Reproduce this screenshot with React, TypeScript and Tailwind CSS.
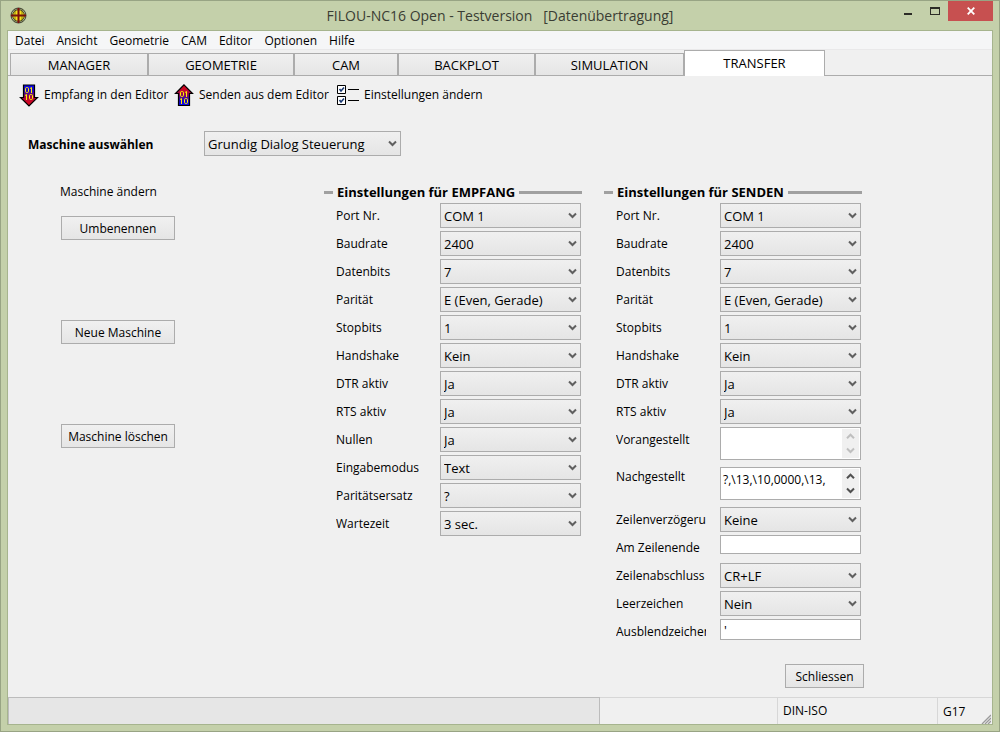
import { useState, type ReactNode } from "react";

const menuItems = ["Datei", "Ansicht", "Geometrie", "CAM", "Editor", "Optionen", "Hilfe"];

const tabs = [
  { name: "MANAGER", width: "w-[138px]" },
  { name: "GEOMETRIE", width: "w-[146px]" },
  { name: "CAM", width: "w-[104px]" },
  { name: "BACKPLOT", width: "w-[137px]" },
  { name: "SIMULATION", width: "w-[149px]" },
  { name: "TRANSFER", width: "w-[141px]" },
];

const commonFields: [string, string][] = [
  ["Port Nr.", "COM 1"],
  ["Baudrate", "2400"],
  ["Datenbits", "7"],
  ["Parität", "E (Even, Gerade)"],
  ["Stopbits", "1"],
  ["Handshake", "Kein"],
  ["DTR aktiv", "Ja"],
  ["RTS aktiv", "Ja"],
];

const receiveFields: [string, string][] = [
  ...commonFields,
  ["Nullen", "Ja"],
  ["Eingabemodus", "Text"],
  ["Paritätsersatz", "?"],
  ["Wartezeit", "3 sec."],
];

function AppIcon() {
  return (
    <svg width="17" height="17" viewBox="0 0 17 17" aria-hidden="true">
      <circle cx="8.5" cy="8.5" r="7.5" fill="#a9b392" stroke="#3f4434" />
      <circle cx="8.5" cy="8.5" r="5.8" fill="#f7e11b" stroke="#4a4413" />
      <path d="M8.5 1v15M1 8.5h15" stroke="#7d0f0c" strokeWidth="2" />
      <path d="M5 1.800v13.400M12 1.800v13.400" stroke="#4a4413" strokeWidth="0.600" />
    </svg>
  );
}

function TransferIcon({ up = false }: { up?: boolean }) {
  const id = up ? "arrow-up-fill" : "arrow-down-fill";
  return (
    <svg width="20" height="23" viewBox="0 0 20 23" className="shrink-0" aria-hidden="true">
      <defs>
        <linearGradient id={id} x1="0" x2="0" y1={up ? "1" : "0"} y2={up ? "0" : "1"}>
          <stop offset="0" stopColor="#0808f0" />
          <stop offset="0.28" stopColor="#2108c0" />
          <stop offset="0.55" stopColor="#9b0a4a" />
          <stop offset="0.8" stopColor="#d00622" />
        </linearGradient>
      </defs>
      <path
        d={up ? "M10 .8 18.500 9.500H15.500V21.500H4.500V9.500H1.500Z" : "M4.500 1H15.500V13.500H18.500L10 22 1.500 13.500H4.500Z"}
        fill={`url(#${id})`}
        stroke="#000"
        strokeWidth="1.200"
      />
      <g fill="none" stroke="#fff200" transform={up ? "translate(0 4)" : undefined}>
        <rect x="6.500" y="3.500" width="3" height="5" rx="1.200" />
        <path d="M11 4.500l1.500-1v5.500M6 11.500l1.500-1v5.500" />
        <rect x="10.500" y="10.500" width="3" height="5" rx="1.200" />
      </g>
    </svg>
  );
}

function ChecklistIcon() {
  return (
    <svg width="22" height="20" viewBox="0 0 22 20" className="shrink-0" fill="none" aria-hidden="true">
      <path d="M.5.500h8v8h-8zM.5 11.500h8v8h-8z" fill="#fff" stroke="#000" />
      <path d="M2.500 4l1.500 2 3-3.500M2.500 15l1.500 2 3-3.500" stroke="#17366f" strokeWidth="1.600" />
      <path d="M11 4.500h11M11 15.500h11" stroke="#000" />
    </svg>
  );
}

function Chevron({ up = false, color = "#606060" }: { up?: boolean; color?: string }) {
  return (
    <svg width="9" height="7" viewBox="0 0 9 7" fill="none" aria-hidden="true">
      <path d={up ? "M1 5.200 4.500 1.700 8 5.200" : "M1 1.500 4.500 5 8 1.500"} stroke={color} strokeWidth="2" />
    </svg>
  );
}

function Combo({ id, value }: { id: string; value: string }) {
  return (
    <div className="relative w-full">
      <select
        id={id}
        className="block h-[25px] w-full appearance-none border border-[#acacac] bg-linear-to-b from-[#f0f0f0] to-[#e5e5e5] pt-[2px] pr-5 pl-[3px] text-[13px] text-black"
      >
        <option>{value}</option>
      </select>
      <span className="pointer-events-none absolute top-[9px] right-1">
        <Chevron />
      </span>
    </div>
  );
}

function Field({ id, label, short = false, tall = false, children }: {
  id: string;
  label: string;
  short?: boolean;
  tall?: boolean;
  children: ReactNode;
}) {
  return (
    <div className={tall ? "flex h-10 items-start" : "flex h-7 items-start"}>
      <label
        htmlFor={id}
        className={
          short
            ? "mr-[14px] ml-3 h-5 w-[90px] shrink-0 overflow-hidden text-[12px] leading-5 whitespace-nowrap"
            : "mr-[14px] ml-3 h-[26px] w-[90px] shrink-0 overflow-hidden text-[12px] leading-[26px] whitespace-nowrap"
        }
      >
        {label}
      </label>
      {children}
    </div>
  );
}

function Group({ title, children }: { title: string; children: ReactNode }) {
  return (
    <section className="w-[258px]">
      <h2 className="mb-px flex h-5 items-center gap-1 text-[13px] font-bold whitespace-nowrap">
        <span className="h-[3px] w-[9px] bg-[#a0a0a0]" />
        <span className="pt-[2px]">{title}</span>
        <span className="h-[3px] flex-1 bg-[#a0a0a0]" />
      </h2>
      <div className="pr-px">{children}</div>
    </section>
  );
}

function MemoField({ id, value, disabled = false }: { id: string; value: string; disabled?: boolean }) {
  const color = disabled ? "#bfbfbf" : "#505050";
  return (
    <div className="flex h-[33px] min-w-0 flex-1 border border-[#acacac] bg-white p-px">
      <textarea
        id={id}
        defaultValue={value}
        className="h-full w-0 min-w-0 flex-1 resize-none overflow-hidden bg-white pl-px text-[12px] leading-[22px] whitespace-pre outline-none"
      />
      <div className="flex w-[17px] flex-col items-center justify-between bg-[#f0f0f0] py-1">
        <button aria-label="Nach oben" className="block"><Chevron up color={color} /></button>
        <button aria-label="Nach unten" className="block"><Chevron color={color} /></button>
      </div>
    </div>
  );
}

const buttonLook = "border border-[#acacac] bg-linear-to-b from-[#f0f0f0] to-[#e5e5e5] pt-px text-[12px] whitespace-nowrap";

export default function App() {
  const [active, setActive] = useState("TRANSFER");
  return (
    <div className="flex min-h-screen flex-col border border-[#98a484] bg-[#c4d0aa] px-[6px] pb-[6px] font-['Open_Sans','Noto_Sans',sans-serif] text-[13px] text-black">
      <header className="flex h-[29px] items-start">
        <div className="flex h-full w-[100px] items-center pl-[3px]"><AppIcon /></div>
        <h1 className="flex-1 text-center text-[14px] leading-[30px] whitespace-pre text-[#3a3d33]">
          FILOU-NC16 Open - Testversion   [Datenübertragung]
        </h1>
        <div className="flex h-5 w-[100px] justify-end">
          <button aria-label="Minimieren" className="flex w-[27px] items-center justify-center">
            <span className="mt-[6px] h-[2px] w-2 bg-[#2c2c26]" />
          </button>
          <button aria-label="Maximieren" className="flex w-[27px] items-center justify-center">
            <span className="h-2 w-[10px] border border-t-2 border-[#2c2c26]" />
          </button>
          <button aria-label="Schließen" className="flex w-[45px] items-center justify-center bg-[#c75050]">
            <svg width="8" height="8" viewBox="0 0 8 8" aria-hidden="true">
              <path d="M.7.7l6.600 6.600M7.300.7.7 7.300" stroke="#fff" strokeWidth="1.800" />
            </svg>
          </button>
        </div>
      </header>

      <div className="flex flex-1 flex-col border border-[#a6b48e] bg-[#f0f0f0]">
        <nav className="flex h-[19px] items-center gap-3 border-b border-[#e9e9ea] bg-[#f5f6f7] pt-[2px] pl-[7px] text-[12px]">
          {menuItems.map((item) => (
            <button key={item} className="leading-[16px]">{item}</button>
          ))}
        </nav>

        <div role="tablist" className="flex h-[26px] items-end border-b border-[#acacac] pl-[2px]">
          {tabs.map(({ name, width }) => (
            <button
              key={name}
              role="tab"
              aria-selected={name === active}
              onClick={() => setActive(name)}
              className={`${width} ${
                name === active
                  ? "-mb-px h-[26px] border border-b-0 border-[#acacac] bg-white"
                  : "h-[22px] border border-b-0 border-[#acacac] bg-linear-to-b from-[#f0f0f0] to-[#e5e5e5] pt-[2px]"
              } shrink-0 text-[13px]`}
            >
              {name}
            </button>
          ))}
        </div>

        <div className="flex h-[38px] items-center pl-[11px] text-[12px]">
          <button className="flex w-[155px] items-center gap-[5px] whitespace-nowrap">
            <TransferIcon />
            Empfang in den Editor
          </button>
          <button className="flex w-[163px] items-center gap-[5px] whitespace-nowrap">
            <TransferIcon up />
            Senden aus dem Editor
          </button>
          <button className="flex items-center gap-[5px] whitespace-nowrap">
            <ChecklistIcon />
            Einstellungen ändern
          </button>
        </div>

        <main className="flex flex-1 flex-col pt-[17px] pl-5">
          <div className="flex h-[25px] items-center">
            <label htmlFor="machine" className="w-44 pt-[2px] text-[12px] font-bold">Maschine auswählen</label>
            <div className="w-[197px]"><Combo id="machine" value="Grundig Dialog Steuerung" /></div>
          </div>

          <div className="mt-[26px] flex items-start">
            <section className="w-[296px] pl-8">
              <h2 className="h-[34px] text-[12px] leading-5">Maschine ändern</h2>
              <div className="flex w-[115px] flex-col gap-20 pl-px">
                <button className={`h-6 ${buttonLook}`}>Umbenennen</button>
                <button className={`h-6 ${buttonLook}`}>Neue Maschine</button>
                <button className={`h-6 ${buttonLook}`}>Maschine löschen</button>
              </div>
            </section>

            <div className="flex gap-[22px]">
              <Group title="Einstellungen für EMPFANG">
                {receiveFields.map(([label, value], i) => (
                  <Field key={label} id={`receive-${i}`} label={label}>
                    <Combo id={`receive-${i}`} value={value} />
                  </Field>
                ))}
              </Group>

              <Group title="Einstellungen für SENDEN">
                {commonFields.map(([label, value], i) => (
                  <Field key={label} id={`send-${i}`} label={label}>
                    <Combo id={`send-${i}`} value={value} />
                  </Field>
                ))}
                <Field id="prefix" label="Vorangestellt" tall>
                  <MemoField id="prefix" value="" disabled />
                </Field>
                <Field id="suffix" label="Nachgestellt" tall short>
                  <MemoField id="suffix" value="?,\13,\10,0000,\13," />
                </Field>
                <Field id="delay" label="Zeilenverzögerung">
                  <Combo id="delay" value="Keine" />
                </Field>
                <Field id="line-end" label="Am Zeilenende">
                  <input id="line-end" className="h-[19px] w-full min-w-0 border border-[#acacac] bg-white px-[3px] outline-none" />
                </Field>
                <Field id="terminator" label="Zeilenabschluss">
                  <Combo id="terminator" value="CR+LF" />
                </Field>
                <Field id="spaces" label="Leerzeichen">
                  <Combo id="spaces" value="Nein" />
                </Field>
                <Field id="skip" label="Ausblendzeichen">
                  <input id="skip" defaultValue="'" className="h-[21px] w-full min-w-0 border border-[#acacac] bg-white px-[3px] outline-none" />
                </Field>
              </Group>
            </div>
          </div>

          <div className="mt-[17px] mb-[9px] flex w-[836px] justify-end">
            <button className={`h-6 w-[79px] ${buttonLook}`}>Schliessen</button>
          </div>
        </main>

        <footer className="flex h-[27px] border-t border-[#d7d7d7]">
          <div className="-mt-px w-[592px] border border-b-0 border-[#bcbcbc] bg-[#e6e6e6]" />
          <div className="flex-1" />
          <div className="w-40 border-l border-[#d7d7d7] pl-[5px] text-[12px] leading-[25px]">DIN-ISO</div>
          <div className="flex w-[55px] items-end justify-between border-l border-[#d7d7d7] pl-[5px] text-[12px]">
            <span className="leading-[25px]">G17</span>
            <svg width="10" height="10" viewBox="0 0 10 10" className="mr-px" aria-hidden="true">
              <path d="M1 10 10 1M4 10l6-6M7 10l3-3" stroke="#9a9a9a" strokeWidth="1.300" />
            </svg>
          </div>
        </footer>
      </div>
    </div>
  );
}
